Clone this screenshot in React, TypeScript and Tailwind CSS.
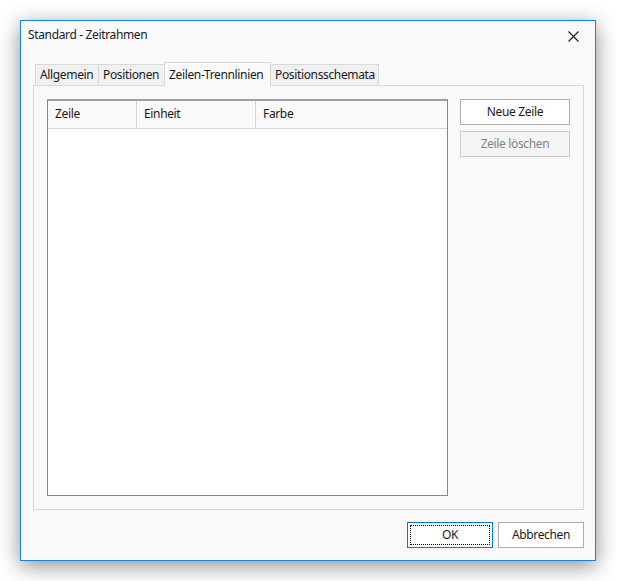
import React from 'react'

// Windows-style dialog: "Standard - Zeitrahmen", tab "Zeilen-Trennlinien" active.
const font = { fontFamily: '"Noto Sans", "Open Sans", sans-serif' }

function Tab({ label, w, active, first }: { label: string; w: string; active?: boolean; first?: boolean }) {
  if (active) {
    return (
      <div
        className={`${w} relative z-10 -mb-px -ml-px h-[24px] whitespace-nowrap border border-b-0 border-[#d9d9d9] bg-[#f9f9f9] pl-[4px] pt-[3px] text-[#1a1a1a]`}
      >
        {label}
      </div>
    )
  }
  return (
    <div
      className={`${w} ${first ? '' : '-ml-px'} h-[21px] whitespace-nowrap border border-b-0 border-[#d9d9d9] bg-[#f0f0f0] pl-[4px] pt-[1px] text-[#1a1a1a]`}
    >
      {label}
    </div>
  )
}

function Header() {
  return (
    <div className="flex h-[28px] border-b border-[#d5d5d5] bg-[#f9f9f9] text-[#1a1a1a]">
      <div className="w-[89px] border-r border-[#d5d5d5] pl-[7px] pt-[4px]">Zeile</div>
      <div className="w-[119px] border-r border-[#d5d5d5] pl-[7px] pt-[4px]">Einheit</div>
      <div className="flex-1 pl-[7px] pt-[4px]">Farbe</div>
    </div>
  )
}

export default function App() {
  return (
    <div
      className="h-[581px] w-[617px] bg-white pl-[20px] pt-[20px] text-[12px] tracking-[-0.35px]"
      style={font}
    >
      <div className="flex h-[541px] w-[576px] flex-col border border-[#1883d7] bg-[#f9f9f9] shadow-[0_5px_20px_rgba(0,0,0,0.45)]">
        {/* title bar */}
        <div className="flex h-[28px] items-center justify-between pl-[7px] pr-[16px] text-[#1a1a1a]">
          <span>Standard - Zeitrahmen</span>
          <svg width="11" height="11" viewBox="0 0 11 11" className="mt-[2px]">
            <path d="M0.5 0.5 L10.5 10.5 M10.5 0.5 L0.5 10.5" stroke="#1a1a1a" strokeWidth="1.1" fill="none" />
          </svg>
        </div>

        {/* tabs */}
        <div className="mt-[13px] flex items-end pl-[14px]">
          <Tab label="Allgemein" w="w-[64px]" first />
          <Tab label="Positionen" w="w-[67px]" />
          <Tab label="Zeilen-Trennlinien" w="w-[107px]" active />
          <Tab label="Positionsschemata" w="w-[109px]" />
        </div>

        {/* tab panel */}
        <div className="ml-[12px] mr-[11px] flex h-[425px] gap-[12px] border border-[#d9d9d9] bg-[#f9f9f9] p-[13px]">
          <div className="flex h-[397px] w-[401px] shrink-0 flex-col border border-[#828790] border-t-2 border-t-[#a0a0a0] bg-white">
            <Header />
            <div className="flex-1 bg-white" />
          </div>
          <div className="flex flex-col gap-[6px]">
            <button className="h-[26px] w-[110px] border border-[#adadad] bg-white text-[#1a1a1a]">Neue Zeile</button>
            <button className="h-[26px] w-[110px] border border-[#cccccc] bg-[#f4f4f4] text-[#838383]">
              Zeile löschen
            </button>
          </div>
        </div>

        {/* bottom buttons */}
        <div className="mt-[12px] flex justify-end gap-[5px] pr-[11px]">
          <button className="flex h-[26px] w-[86px] items-center justify-center border border-[#0078d7] bg-white p-[2px] text-[#1a1a1a]">
            <span className="flex h-full w-full items-center justify-center border border-dotted border-black">OK</span>
          </button>
          <button className="h-[26px] w-[86px] border border-[#adadad] bg-white text-[#1a1a1a]">Abbrechen</button>
        </div>
      </div>
    </div>
  )
}
